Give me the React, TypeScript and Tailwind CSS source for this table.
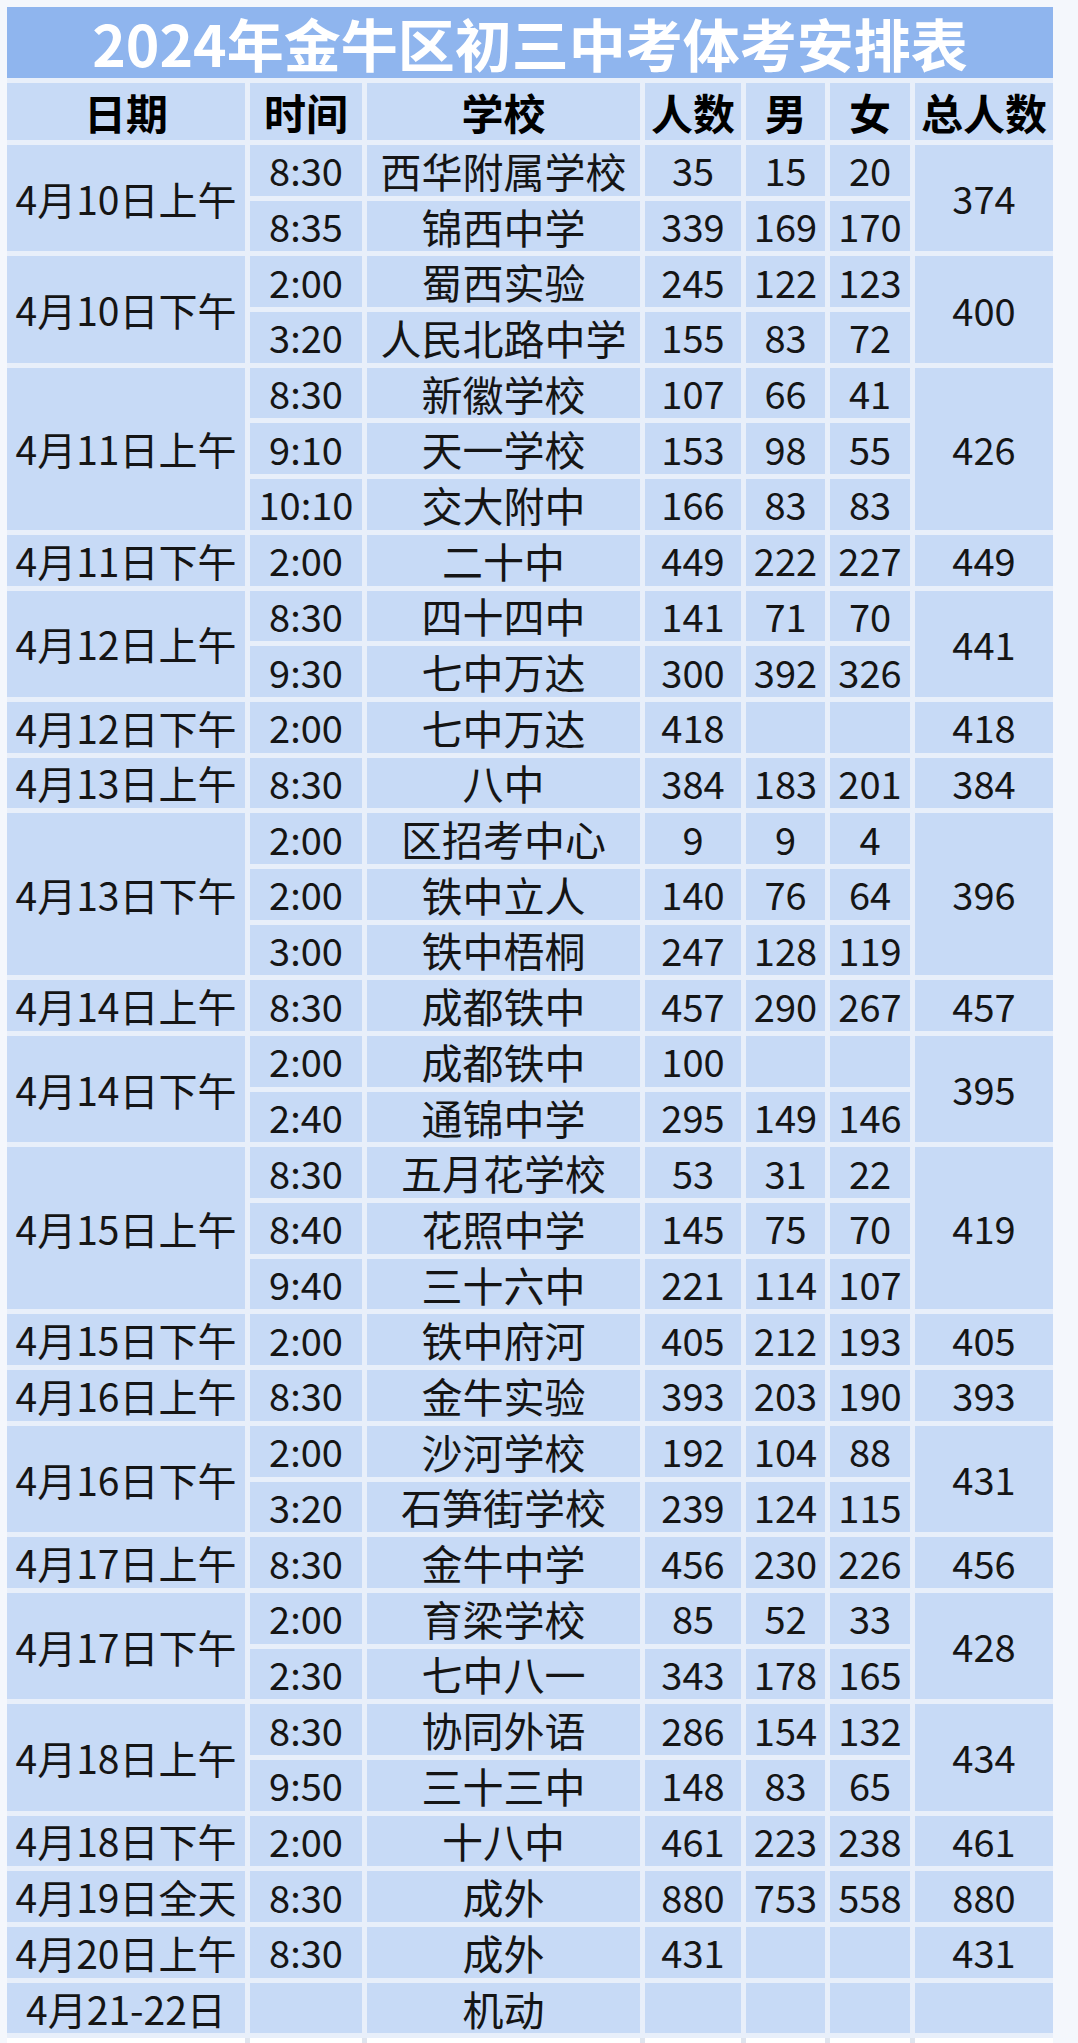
import React from "react";

type Row = { time: string; school: string; n: string; m: string; f: string };
type Group = { date: string; total: string; rows: Row[] };

const groups: Group[] = [
  {
    date: "4月10日上午",
    total: "374",
    rows: [
      { time: "8:30", school: "西华附属学校", n: "35", m: "15", f: "20" },
      { time: "8:35", school: "锦西中学", n: "339", m: "169", f: "170" },
    ],
  },
  {
    date: "4月10日下午",
    total: "400",
    rows: [
      { time: "2:00", school: "蜀西实验", n: "245", m: "122", f: "123" },
      { time: "3:20", school: "人民北路中学", n: "155", m: "83", f: "72" },
    ],
  },
  {
    date: "4月11日上午",
    total: "426",
    rows: [
      { time: "8:30", school: "新徽学校", n: "107", m: "66", f: "41" },
      { time: "9:10", school: "天一学校", n: "153", m: "98", f: "55" },
      { time: "10:10", school: "交大附中", n: "166", m: "83", f: "83" },
    ],
  },
  {
    date: "4月11日下午",
    total: "449",
    rows: [{ time: "2:00", school: "二十中", n: "449", m: "222", f: "227" }],
  },
  {
    date: "4月12日上午",
    total: "441",
    rows: [
      { time: "8:30", school: "四十四中", n: "141", m: "71", f: "70" },
      { time: "9:30", school: "七中万达", n: "300", m: "392", f: "326" },
    ],
  },
  {
    date: "4月12日下午",
    total: "418",
    rows: [{ time: "2:00", school: "七中万达", n: "418", m: "", f: "" }],
  },
  {
    date: "4月13日上午",
    total: "384",
    rows: [{ time: "8:30", school: "八中", n: "384", m: "183", f: "201" }],
  },
  {
    date: "4月13日下午",
    total: "396",
    rows: [
      { time: "2:00", school: "区招考中心", n: "9", m: "9", f: "4" },
      { time: "2:00", school: "铁中立人", n: "140", m: "76", f: "64" },
      { time: "3:00", school: "铁中梧桐", n: "247", m: "128", f: "119" },
    ],
  },
  {
    date: "4月14日上午",
    total: "457",
    rows: [{ time: "8:30", school: "成都铁中", n: "457", m: "290", f: "267" }],
  },
  {
    date: "4月14日下午",
    total: "395",
    rows: [
      { time: "2:00", school: "成都铁中", n: "100", m: "", f: "" },
      { time: "2:40", school: "通锦中学", n: "295", m: "149", f: "146" },
    ],
  },
  {
    date: "4月15日上午",
    total: "419",
    rows: [
      { time: "8:30", school: "五月花学校", n: "53", m: "31", f: "22" },
      { time: "8:40", school: "花照中学", n: "145", m: "75", f: "70" },
      { time: "9:40", school: "三十六中", n: "221", m: "114", f: "107" },
    ],
  },
  {
    date: "4月15日下午",
    total: "405",
    rows: [{ time: "2:00", school: "铁中府河", n: "405", m: "212", f: "193" }],
  },
  {
    date: "4月16日上午",
    total: "393",
    rows: [{ time: "8:30", school: "金牛实验", n: "393", m: "203", f: "190" }],
  },
  {
    date: "4月16日下午",
    total: "431",
    rows: [
      { time: "2:00", school: "沙河学校", n: "192", m: "104", f: "88" },
      { time: "3:20", school: "石笋街学校", n: "239", m: "124", f: "115" },
    ],
  },
  {
    date: "4月17日上午",
    total: "456",
    rows: [{ time: "8:30", school: "金牛中学", n: "456", m: "230", f: "226" }],
  },
  {
    date: "4月17日下午",
    total: "428",
    rows: [
      { time: "2:00", school: "育梁学校", n: "85", m: "52", f: "33" },
      { time: "2:30", school: "七中八一", n: "343", m: "178", f: "165" },
    ],
  },
  {
    date: "4月18日上午",
    total: "434",
    rows: [
      { time: "8:30", school: "协同外语", n: "286", m: "154", f: "132" },
      { time: "9:50", school: "三十三中", n: "148", m: "83", f: "65" },
    ],
  },
  {
    date: "4月18日下午",
    total: "461",
    rows: [{ time: "2:00", school: "十八中", n: "461", m: "223", f: "238" }],
  },
  {
    date: "4月19日全天",
    total: "880",
    rows: [{ time: "8:30", school: "成外", n: "880", m: "753", f: "558" }],
  },
  {
    date: "4月20日上午",
    total: "431",
    rows: [{ time: "8:30", school: "成外", n: "431", m: "", f: "" }],
  },
  {
    date: "4月21-22日",
    total: "",
    rows: [{ time: "", school: "机动", n: "", m: "", f: "" }],
  },
];

const spans: Record<number, string> = { 1: "", 2: "row-span-2", 3: "row-span-3" };

const cols = "grid grid-cols-[238px_112px_273px_96px_79px_80px_138px] gap-[5px]";
const cell = "flex items-center justify-center bg-[#c7daf6] text-[#151515] whitespace-nowrap";

export default function App() {
  return (
    <div
      className="w-[1078px] min-h-[2043px] bg-[#f4f7fc] pl-[7px] pt-[7px] overflow-hidden"
      style={{ fontFamily: '"Noto Sans CJK SC", "Noto Sans", sans-serif' }}
    >
      <div className="flex flex-col gap-[5px] w-[1046px] bg-[#e8effa]">
        {/* title */}
        <div className="h-[71px] bg-[#8fb5ee] flex items-center justify-center text-white font-bold text-[57px] leading-none">
          2024年金牛区初三中考体考安排表
        </div>

        {/* header */}
        <div className={`${cols} h-[57px]`}>
          {["日期", "时间", "学校", "人数", "男", "女", "总人数"].map((h) => (
            <div key={h} className={`${cell} font-bold text-[42px] leading-none text-black`}>
              {h}
            </div>
          ))}
        </div>

        {/* body */}
        <div className={`${cols} auto-rows-[50.7px]`}>
          {groups.map((g) => {
            const span = spans[g.rows.length];
            return (
              <React.Fragment key={g.date}>
                <div className={`${cell} ${span} col-start-1 text-[39px] leading-none`}>{g.date}</div>
                {g.rows.map((r, i) => (
                  <React.Fragment key={i}>
                    <div className={`${cell} col-start-2 text-[38px] leading-none`}>{r.time}</div>
                    <div className={`${cell} col-start-3 text-[41px] leading-none`}>{r.school}</div>
                    <div className={`${cell} col-start-4 text-[38px] leading-none`}>{r.n}</div>
                    <div className={`${cell} col-start-5 text-[38px] leading-none`}>{r.m}</div>
                    <div className={`${cell} col-start-6 text-[38px] leading-none`}>{r.f}</div>
                    {i === 0 && (
                      <div className={`${cell} ${span} col-start-7 text-[38px] leading-none`}>{g.total}</div>
                    )}
                  </React.Fragment>
                ))}
              </React.Fragment>
            );
          })}
        </div>

        {/* next empty sheet row */}
        <div className={`${cols} h-[12px] bg-[#dfe5ee] gap-[2px]`}>
          {Array.from({ length: 7 }).map((_, i) => (
            <div key={i} className="bg-white" />
          ))}
        </div>
      </div>
    </div>
  );
}
